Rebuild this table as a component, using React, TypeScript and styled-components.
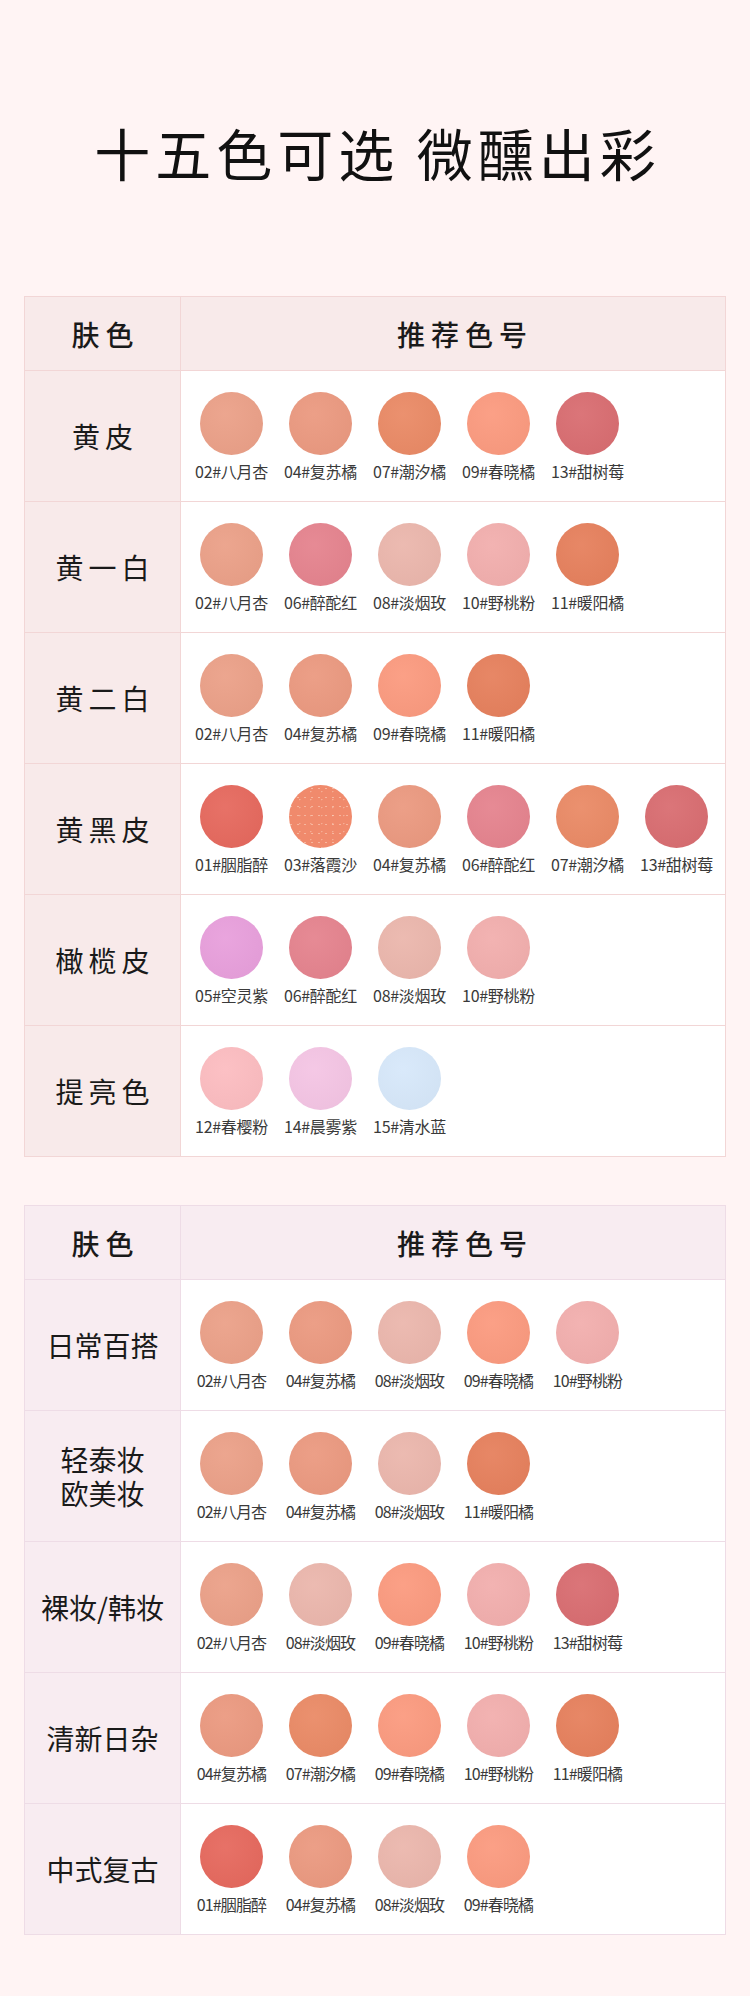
import React from "react";
import styled, { createGlobalStyle, css } from "styled-components";

const GlobalStyle = createGlobalStyle`
	html, body {
		margin: 0;
		padding: 0;
		background: #fff4f4;
	}
	body {
		font-family: "Noto Sans CJK SC", "Noto Sans", sans-serif;
	}
`;

type Tone = "rose" | "lilac";

const tones = {
	rose: { line: "#f2d6d6", head: "#f8eaea", side: "#f8eaea" },
	lilac: { line: "#eedce6", head: "#f8ecf1", side: "#f8ecf1" },
};

const Page = styled.div`
	width: 750px;
	height: 1996px;
	background: #fff4f4;
	padding-top: 124px;
	box-sizing: border-box;
	overflow: hidden;
`;

const Title = styled.h1`
	margin: 0 0 116px;
	text-align: center;
	font-size: 56px;
	line-height: 56px;
	font-weight: 400;
	letter-spacing: 5px;
	color: #111;
	padding-left: 5px;
`;

const Table = styled.div<{ $tone: Tone }>`
	margin: 0 24px 48px;
	display: grid;
	grid-template-columns: 155px 1fr;
	grid-template-rows: 73px;
	grid-auto-rows: 130px;
	gap: 1px;
	padding: 1px;
	background: ${(p) => tones[p.$tone].line};
`;

const HeadCell = styled.div<{ $tone: Tone; $shift?: number }>`
	background: ${(p) => tones[p.$tone].head};
	display: flex;
	align-items: center;
	justify-content: center;
	font-size: 28px;
	font-weight: 500;
	letter-spacing: 6px;
	padding-left: ${(p) => 6 + (p.$shift ?? 0)}px;
	color: #1a1a1a;
`;

const SideCell = styled.div<{ $tone: Tone }>`
	background: ${(p) => tones[p.$tone].side};
	display: flex;
	flex-direction: column;
	align-items: center;
	justify-content: center;
	text-align: center;
	font-size: 28px;
	line-height: 34px;
	color: #1a1a1a;
	${(p) =>
		p.$tone === "rose"
			? css`
					letter-spacing: 5px;
					padding-left: 5px;
			  `
			: css`
					letter-spacing: 0;
			  `}
`;

const SwatchCell = styled.div`
	background: #fff;
	display: flex;
	align-items: center;
	padding-left: 6px;
`;

const Swatch = styled.div`
	width: 89px;
	display: flex;
	flex-direction: column;
	align-items: center;
	gap: 7px;
`;

const Dot = styled.div<{ $color: string; $sparkle?: boolean }>`
	width: 63px;
	height: 63px;
	border-radius: 50%;
	background: ${(p) =>
		p.$sparkle
			? `radial-gradient(circle at 30% 40%, rgba(255,235,220,.45) 0 0.6px, transparent 1px) 0 0 / 7px 9px,
			   radial-gradient(circle at 70% 20%, rgba(255,240,225,.35) 0 0.6px, transparent 1px) 3px 5px / 11px 8px,
			   ${p.$color}`
			: `radial-gradient(circle at 40% 35%, rgba(255,255,255,.05), rgba(0,0,0,.025) 75%), ${p.$color}`};
`;

const Label = styled.div<{ $tone: Tone }>`
	font-size: 16px;
	line-height: 19px;
	color: #3a3a3a;
	white-space: nowrap;
	letter-spacing: ${(p) => (p.$tone === "lilac" ? "-0.9px" : "-0.3px")};
`;

const shades: Record<string, { name: string; color: string; sparkle?: boolean }> = {
	"01": { name: "胭脂醉", color: "#e66a5f" },
	"02": { name: "八月杏", color: "#eba189" },
	"03": { name: "落霞沙", color: "#f08a6c", sparkle: true },
	"04": { name: "复苏橘", color: "#eb9a81" },
	"05": { name: "空灵紫", color: "#e8a0dc" },
	"06": { name: "醉酡红", color: "#e5848f" },
	"07": { name: "潮汐橘", color: "#ea8b67" },
	"08": { name: "淡烟玫", color: "#ebb7ad" },
	"09": { name: "春晓橘", color: "#fb9b80" },
	"10": { name: "野桃粉", color: "#f2afae" },
	"11": { name: "暖阳橘", color: "#e6815e" },
	"12": { name: "春樱粉", color: "#fcbdc1" },
	"13": { name: "甜树莓", color: "#d96e72" },
	"14": { name: "晨雾紫", color: "#f4c5e4" },
	"15": { name: "清水蓝", color: "#d7e8fa" },
};

const skinRows: [string, string[]][] = [
	["黄皮", ["02", "04", "07", "09", "13"]],
	["黄一白", ["02", "06", "08", "10", "11"]],
	["黄二白", ["02", "04", "09", "11"]],
	["黄黑皮", ["01", "03", "04", "06", "07", "13"]],
	["橄榄皮", ["05", "06", "08", "10"]],
	["提亮色", ["12", "14", "15"]],
];

const lookRows: [string, string[]][] = [
	["日常百搭", ["02", "04", "08", "09", "10"]],
	["轻泰妆\n欧美妆", ["02", "04", "08", "11"]],
	["裸妆/韩妆", ["02", "08", "09", "10", "13"]],
	["清新日杂", ["04", "07", "09", "10", "11"]],
	["中式复古", ["01", "04", "08", "09"]],
];

const ShadeTable: React.FC<{ tone: Tone; rows: [string, string[]][] }> = ({ tone, rows }) => (
	<Table $tone={tone}>
		<HeadCell $tone={tone}>肤色</HeadCell>
		<HeadCell $tone={tone} $shift={18}>
			推荐色号
		</HeadCell>
		{rows.map(([side, codes]) => (
			<React.Fragment key={side}>
				<SideCell $tone={tone}>
					{side.split("\n").map((line) => (
						<span key={line}>{line}</span>
					))}
				</SideCell>
				<SwatchCell>
					{codes.map((code) => (
						<Swatch key={code}>
							<Dot $color={shades[code].color} $sparkle={shades[code].sparkle} />
							<Label $tone={tone}>
								{code}#{shades[code].name}
							</Label>
						</Swatch>
					))}
				</SwatchCell>
			</React.Fragment>
		))}
	</Table>
);

export default function App() {
	return (
		<>
			<GlobalStyle />
			<Page>
				<Title>十五色可选 微醺出彩</Title>
				<ShadeTable tone="rose" rows={skinRows} />
				<ShadeTable tone="lilac" rows={lookRows} />
			</Page>
		</>
	);
}
